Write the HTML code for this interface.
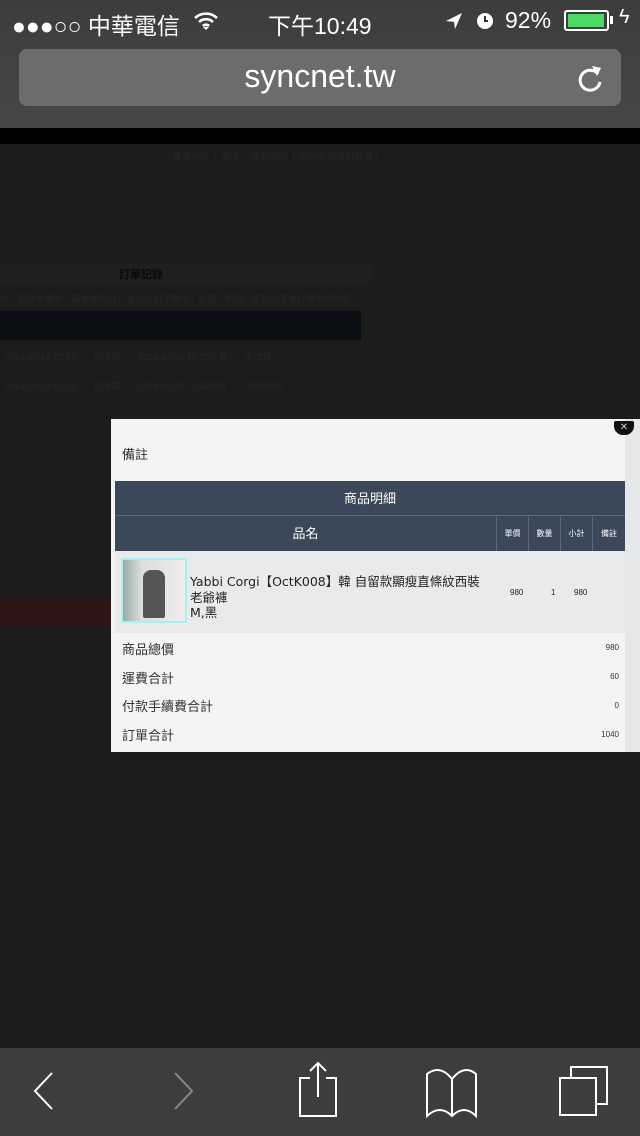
<!DOCTYPE html>
<html><head><meta charset="utf-8"><style>
*{margin:0;padding:0;box-sizing:border-box}
body{width:640px;height:1136px;background:#1c1c1c;font-family:"Liberation Sans","Noto Sans CJK TC",sans-serif;position:relative;overflow:hidden}
.a{position:absolute}
.bg{color:#262626;font-size:9px;white-space:nowrap}
</style></head><body>
<div class="a" style="left:0;top:0;width:640px;height:128px;background:linear-gradient(#3c3c3c,#474747)"></div>
<div class="a" style="left:12px;top:7px;color:#fff;font-size:23px;">●●●○○ 中華電信</div>
<svg class="a" style="left:193px;top:10px" width="26" height="22" viewBox="0 0 26 22"><path d="M2 8a16 16 0 0 1 22 0M6 12a10 10 0 0 1 14 0M10 16a4 4 0 0 1 6 0" stroke="#fff" stroke-width="2.6" fill="none"/><path d="M10 17l3 3 3-3z" fill="#fff"/></svg>
<div class="a" style="left:268px;top:7px;color:#fff;font-size:23px;">下午10:49</div>
<svg class="a" style="left:444px;top:11px" width="20" height="20"><path d="M2 10L18 2 11 18 10 11z" fill="#fff"/></svg>
<svg class="a" style="left:474px;top:9px" width="22" height="22"><circle cx="11" cy="12" r="8" fill="#fff"/><path d="M11 7v5h3" stroke="#333" stroke-width="2" fill="none"/></svg>
<div class="a" style="left:505px;top:7px;color:#fff;font-size:23px;">92%</div>
<div class="a" style="left:564px;top:10px;width:45px;height:21px;border:2px solid #fff;border-radius:3px;padding:2px"><div style="width:36px;height:13px;background:#4cd964"></div></div>
<div class="a" style="left:610px;top:16px;width:3px;height:8px;background:#fff"></div>
<div class="a" style="left:619px;top:6px;color:#fff;font-size:20px">ϟ</div>
<div class="a" style="left:19px;top:49px;width:602px;height:57px;background:#6c6c6c;border-radius:8px"></div>
<div class="a" style="left:0;top:58px;width:640px;text-align:center;color:#fff;font-size:32px;">syncnet.tw</div>
<svg class="a" style="left:576px;top:62px" width="30" height="32"><path d="M22 12A10 10 0 1 0 24 20" stroke="#fff" stroke-width="3" fill="none"/><path d="M16 4l9 2-4 8z" fill="#fff"/></svg>
<div class="a" style="left:0;top:128px;width:640px;height:16px;background:#000"></div>
<div class="a bg" style="left:173px;top:149px">會員中心 &nbsp;|&nbsp; 登出 &nbsp;|&nbsp; 匯款說明 &nbsp;|&nbsp; SYNC 建築網首頁 |</div>
<div class="a" style="left:0;top:263px;width:372px;height:20px;background:#1f1f1f"></div>
<div class="a" style="left:119px;top:266px;color:#0a0a0a;font-size:11px;font-weight:bold">訂單記錄</div>
<div class="a bg" style="left:0;top:292px">中，若過未繳款「最後繳款日」會以紅色字顯示，點選「明細」按鈕以查看訂單明細內容。</div>
<div class="a" style="left:0;top:311px;width:361px;height:29px;background:#0b0e12"></div>
<div class="a bg" style="left:5px;top:350px">2014-10-19 22:59 &nbsp;&nbsp;&nbsp;&nbsp;&nbsp; 已收款 &nbsp;&nbsp;&nbsp;&nbsp;&nbsp; 2014-10-28 18:09出貨 &nbsp;&nbsp;&nbsp;&nbsp;&nbsp; 未出貨</div>
<div class="a bg" style="left:5px;top:379px">2014-10-19 01:28 &nbsp;&nbsp;&nbsp;&nbsp;&nbsp; 已收款 &nbsp;&nbsp;&nbsp;&nbsp;&nbsp; 2014-10-28 11:42出貨 &nbsp;&nbsp;&nbsp;&nbsp;&nbsp; 76008883</div>
<div class="a" style="left:0;top:600px;width:111px;height:26px;background:#2e1616"></div>
<!-- modal -->
<div class="a" style="left:111px;top:419px;width:529px;height:333px;background:#f3f4f6"></div>
<div class="a" style="left:625px;top:419px;width:15px;height:333px;background:#e6e7e9"></div>
<div class="a" style="left:614px;top:421px;width:20px;height:14px;background:#111;border-radius:2px 2px 9px 9px;color:#ccc;font-size:10px;text-align:center;line-height:13px">✕</div>
<div class="a" style="left:122px;top:444px;font-size:13px;color:#333">備註</div>
<div class="a" style="left:115px;top:481px;width:510px;height:35px;background:#3a4859;color:#fff;font-size:13px;text-align:center;line-height:35px;border-bottom:1px solid #5c6b7a">商品明細</div>
<div class="a" style="left:115px;top:516px;width:510px;height:35px;background:#3a4859;color:#fff;display:flex;font-size:8px;text-align:center;line-height:35px">
<div style="width:382px;font-size:13px;border-right:1px solid #5c6b7a">品名</div><div style="width:32px;border-right:1px solid #5c6b7a">單價</div><div style="width:32px;border-right:1px solid #5c6b7a">數量</div><div style="width:32px;border-right:1px solid #5c6b7a">小計</div><div style="width:32px">備註</div></div>
<div class="a" style="left:115px;top:551px;width:510px;height:82px;background:#e9eaec"></div>
<div class="a" style="left:121px;top:558px;width:66px;height:65px;background:linear-gradient(90deg,#9aa 0,#ddd 30%,#eee 100%);border:2px solid #aee"><div style="margin:10px 0 0 20px;width:22px;height:48px;background:#555;border-radius:8px 8px 2px 2px"></div></div>
<div class="a" style="left:190px;top:574px;font-size:12.5px;color:#222;line-height:15.5px;font-family:'DejaVu Sans','Noto Sans CJK TC',sans-serif">Yabbi Corgi【OctK008】韓 自留款顯瘦直條紋西裝<br>老爺褲<br>M,黑</div>
<div class="a" style="left:510px;top:588px;font-size:8px;color:#222">980</div>
<div class="a" style="left:551px;top:588px;font-size:8px;color:#222">1</div>
<div class="a" style="left:574px;top:588px;font-size:8px;color:#222">980</div>
<div class="a" style="left:122px;top:639px;font-size:13px;color:#333">商品總價</div><div class="a" style="left:580px;top:643px;width:39px;text-align:right;font-size:8px;color:#333">980</div>
<div class="a" style="left:122px;top:668px;font-size:13px;color:#333">運費合計</div><div class="a" style="left:580px;top:672px;width:39px;text-align:right;font-size:8px;color:#333">60</div>
<div class="a" style="left:122px;top:696px;font-size:13px;color:#333">付款手續費合計</div><div class="a" style="left:580px;top:701px;width:39px;text-align:right;font-size:8px;color:#333">0</div>
<div class="a" style="left:122px;top:725px;font-size:13px;color:#333">訂單合計</div><div class="a" style="left:580px;top:730px;width:39px;text-align:right;font-size:8px;color:#333">1040</div>
<!-- toolbar -->
<div class="a" style="left:0;top:1048px;width:640px;height:88px;background:#3d3d3d"></div>
<svg class="a" style="left:0;top:1048px" width="640" height="88">
<g fill="none" stroke-width="2">
<path d="M52 25L35 43 52 61" stroke="#fff"/>
<path d="M175 25L192 43 175 61" stroke="#888"/>
<path d="M310 30H300V68H336V30H326M318 49V15M310 23L318 15 326 23" stroke="#fff"/>
<path d="M452 68V31Q440 16 427 26V68Q440 56 452 68Q464 56 476 68V26Q464 16 452 31" stroke="#fff"/>
<path d="M560 30H596V67H560ZM571 30V19H607V56H596" stroke="#fff"/>
</g></svg>
</body></html>
